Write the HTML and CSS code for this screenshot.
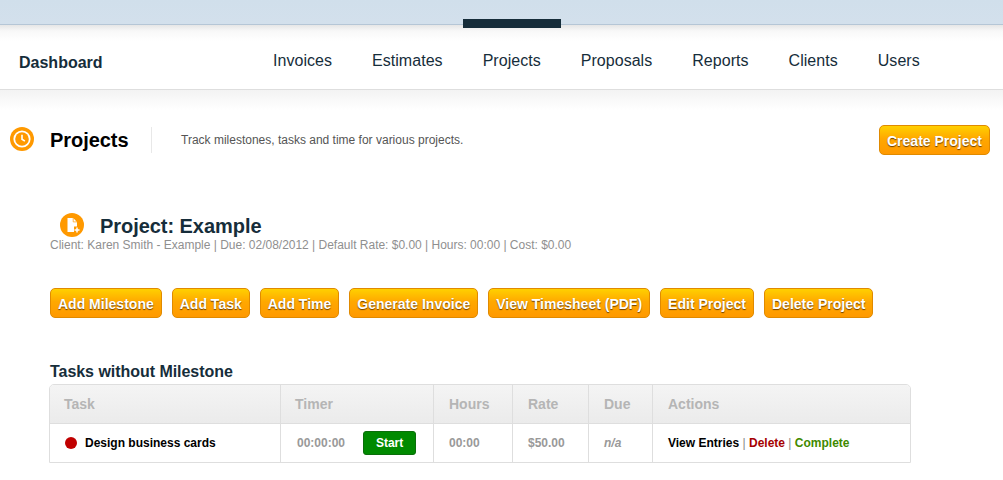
FILE: index.html
```html
<!DOCTYPE html>
<html lang="en">
<head>
<meta charset="utf-8">
<title>Projects</title>
<link rel="stylesheet" href="styles.css">
</head>
<body>
<header class="topbar"><span class="tab"></span></header>
<nav class="nav">
  <a class="brand" href="#">Dashboard</a>
  <ul class="menu">
    <li><a href="#">Invoices</a></li>
    <li><a href="#">Estimates</a></li>
    <li><a href="#">Projects</a></li>
    <li><a href="#">Proposals</a></li>
    <li><a href="#">Reports</a></li>
    <li><a href="#">Clients</a></li>
    <li><a href="#">Users</a></li>
  </ul>
</nav>
<div class="fade"></div>
<section class="pagehead">
  <svg class="clock" viewBox="0 0 24 24" width="24" height="24"><circle cx="12" cy="12" r="12" fill="#ff9900"/><circle cx="12" cy="12" r="8.600" fill="#fff"/><circle cx="12" cy="12" r="6.800" fill="#ff9900"/><path d="M12 7.800v4.400l2.900 1.900" fill="none" stroke="#fff" stroke-width="1.600"/></svg>
  <h1 class="pagetitle">Projects</h1>
  <p class="pagedesc">Track milestones, tasks and time for various projects.</p>
  <a class="btn create" href="#">Create Project</a>
</section>
<main class="content">
  <div class="project">
    <svg class="docicon" viewBox="0 0 24 24" width="24" height="24"><circle cx="12" cy="12" r="12" fill="#ff9900"/><path d="M7.500 5h5.700l3.800 3.900V13.500h-3V19H7.500z" fill="#fff"/><path d="M13.200 5v3.900H17" fill="none" stroke="#ff9900" stroke-width=".7"/><path d="M17 14.500v5M14.500 17h5" stroke="#fff" stroke-width="1.500" fill="none"/></svg>
    <h2 class="projtitle">Project: Example</h2>
  </div>
  <p class="meta">Client: Karen Smith - Example | Due: 02/08/2012 | Default Rate: $0.00 | Hours: 00:00 | Cost: $0.00</p>
  <div class="actions">
    <a class="btn" href="#">Add Milestone</a>
    <a class="btn" href="#">Add Task</a>
    <a class="btn" href="#">Add Time</a>
    <a class="btn" href="#">Generate Invoice</a>
    <a class="btn" href="#">View Timesheet (PDF)</a>
    <a class="btn" href="#">Edit Project</a>
    <a class="btn" href="#">Delete Project</a>
  </div>
  <h3 class="subhead">Tasks without Milestone</h3>
  <div class="tablewrap">
    <div class="row headrow">
      <div class="cell c1">Task</div>
      <div class="cell c2">Timer</div>
      <div class="cell c3">Hours</div>
      <div class="cell c4">Rate</div>
      <div class="cell c5">Due</div>
      <div class="cell c6">Actions</div>
    </div>
    <div class="row bodyrow">
      <div class="cell c1 taskname"><span class="dot"></span>Design business cards</div>
      <div class="cell c2 timer"><span>00:00:00</span><a class="start" href="#">Start</a></div>
      <div class="cell c3 num">00:00</div>
      <div class="cell c4 num">$50.00</div>
      <div class="cell c5 num due">n/a</div>
      <div class="cell c6 links"><span><a class="view" href="#">View Entries</a> <i>|</i> <a class="del" href="#">Delete</a> <i>|</i> <a class="done" href="#">Complete</a></span></div>
    </div>
  </div>
</main>
</body>
</html>
```
FILE: styles.css
```css
* { box-sizing: border-box; }
html, body { margin: 0; padding: 0; }
body {
  width: 1003px;
  height: 480px;
  overflow: hidden;
  background: #fff;
  font-family: "Liberation Sans", Arial, sans-serif;
  color: #162d3a;
}
a { text-decoration: none; color: inherit; }
h1, h2, h3, p, ul { margin: 0; padding: 0; }

.topbar {
  position: relative;
  height: 25px;
  background: linear-gradient(#d0dfeb, #d3e0ec);
  border-bottom: 1px solid #b5c6d6;
}
.tab {
  position: absolute;
  left: 463px;
  top: 19px;
  width: 98px;
  height: 9px;
  background: #162d3a;
}

.nav {
  display: flex;
  align-items: center;
  height: 65px;
  background: linear-gradient(#e6e6e6 0, #f8f8f8 6px, #fff 16px);
  border-bottom: 1px solid #dedede;
}
.brand {
  flex: none;
  margin-left: 19px;
  margin-top: 11px;
  width: 254px;
  font-size: 16px;
  font-weight: 700;
  line-height: 18px;
}
.menu {
  display: flex;
  gap: 40px;
  list-style: none;
  margin-top: 8px;
  font-size: 16px;
  letter-spacing: .04px;
  line-height: 18px;
}
.fade {
  height: 20px;
  background: linear-gradient(#f3f3f3, #fff);
}

.pagehead {
  display: flex;
  align-items: center;
  height: 30px;
  margin-top: 15px;
  padding-left: 10px;
}
.clock { flex: none; margin-top: -2px; }
.pagetitle {
  margin-left: 16px;
  width: 102px;
  height: 26px;
  border-right: 1px solid #e8e8e8;
  font-size: 20px;
  letter-spacing: -.06px;
  line-height: 26px;
  color: #000;
}
.pagedesc {
  margin-left: 29px;
  font-size: 12px;
  line-height: 14px;
  color: #555;
  flex: 1;
}
.btn {
  display: block;
  height: 30px;
  padding: 0 7px;
  border: 1px solid #e08a00;
  border-radius: 5px;
  background: linear-gradient(#ffd000, #ffa800 45%, #ff9900);
  color: #fff;
  font-size: 14px;
  font-weight: 700;
  letter-spacing: .005px;
  line-height: 30px;
  white-space: nowrap;
  text-shadow: 0 1px 1px rgba(90, 50, 0, .9);
}
.create { margin-right: 13px; }

.content { padding-left: 50px; }
.project {
  display: flex;
  align-items: center;
  height: 24px;
  margin-top: 58px;
  padding-left: 10px;
}
.docicon { flex: none; }
.projtitle {
  margin-left: 16px;
  margin-top: 2px;
  font-size: 20px;
  letter-spacing: -.05px;
  line-height: 26px;
}
.meta {
  margin-top: 1px;
  font-size: 12px;
  letter-spacing: -.01px;
  line-height: 14px;
  color: #8f8f8f;
}
.actions {
  display: flex;
  gap: 10px;
  margin-top: 36px;
}
.subhead {
  margin-top: 45px;
  font-size: 16px;
  letter-spacing: -.04px;
  line-height: 18px;
}

.tablewrap {
  width: 862px;
  margin-top: 3px;
  margin-left: -1px;
  border: 1px solid #dedede;
  border-radius: 5px 5px 0 0;
  overflow: hidden;
}
.row { display: flex; }
.headrow {
  height: 39px;
  background: linear-gradient(#f4f4f4, #ebebeb);
  border-bottom: 1px solid #dedede;
  font-size: 14px;
  font-weight: 700;
  color: #b5b5b5;
}
.bodyrow {
  height: 38px;
  font-size: 12px;
  font-weight: 700;
  color: #999;
}
.cell {
  display: flex;
  align-items: center;
  flex: none;
  border-right: 1px solid #dedede;
  padding-left: 15px;
  white-space: pre;
}
.c1 { width: 231px; padding-left: 14px; }
.c2 { width: 153px; padding-left: 14px; }
.c3 { width: 79px; }
.c4 { width: 76px; }
.c5 { width: 64px; }
.c6 { width: 258px; border-right: 0; }
.taskname { color: #000; padding-left: 15px; }
.dot {
  width: 12px;
  height: 12px;
  margin-right: 8px;
  border-radius: 50%;
  background: #c00000;
}
.timer { padding-left: 16px; }
.start {
  display: block;
  width: 53px;
  height: 24px;
  margin-left: 18px;
  border: 1px solid #0a6e0a;
  border-radius: 3px;
  background: #008a00;
  color: #fff;
  text-align: center;
  line-height: 22px;
}
.num { padding-left: 15px; }
.due { font-style: italic; }
.links i { font-style: normal; font-weight: 400; color: #888; }
.view { color: #000; }
.del { color: #a50000; }
.done { color: #3f8a00; }
```
